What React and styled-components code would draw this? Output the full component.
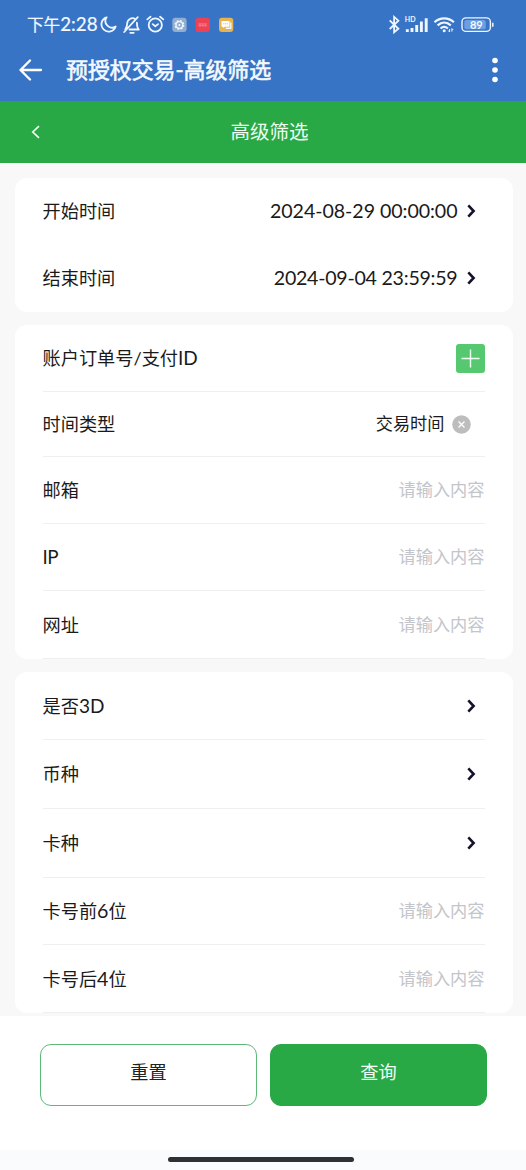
import React from 'react';
import styled, { createGlobalStyle } from 'styled-components';

const GlobalStyle = createGlobalStyle`
  * { box-sizing: border-box; }
  body {
    margin: 0;
    background: #fff;
    color: #1a1a1a;
    font-family: Lato, "Noto Sans CJK SC", sans-serif;
  }
`;

const Screen = styled.div`
  width: 526px;
  height: 1170px;
  display: flex;
  flex-direction: column;
  overflow: hidden;
  background: #fff;
`;

const TopArea = styled.header`
  height: 101px;
  flex: none;
  background: #3874c6;
  color: #f4f9ff;
`;

const StatusBar = styled.div`
  height: 40px;
  padding: 10px 32px 0 27px;
  display: flex;
  justify-content: space-between;
`;

const StatusGroup = styled.div`
  height: 30px;
  display: flex;
  align-items: center;
  svg { display: block; flex: none; }
`;

const Clock = styled.span`
  width: 73px;
  font-size: 16.6px;
  line-height: 28px;
  white-space: nowrap;
  -webkit-text-stroke: 0.2px currentColor;
`;

const Digits = styled.span`
  font-size: ${(p) => p.$size || 19.6}px;
  letter-spacing: ${(p) => p.$track || 0}px;
  line-height: 1;
`;

const TitleBar = styled.div`
  height: 60px;
  padding: 0 25px 0 19px;
  display: flex;
  align-items: center;
  svg { display: block; }
`;

const Title = styled.h1`
  flex: 1;
  margin: 0 0 0 23px;
  font-size: 21.9px;
  font-weight: 400;
  line-height: 30px;
  -webkit-text-stroke: 0.6px currentColor;
`;

const SubHeader = styled.div`
  height: 62px;
  flex: none;
  padding: 0 31px;
  display: grid;
  grid-template-columns: 10px 1fr 0;
  align-items: center;
  background: #29a846;
  color: #effff0;
  font-size: 19.5px;
  line-height: 30px;
  text-align: center;
  svg { display: block; }
`;

const SubTitle = styled.span`
  padding-left: 3px;
`;

const Content = styled.main`
  height: 853px;
  flex: none;
  padding: 15px 13.5px 0 14.5px;
  display: flex;
  flex-direction: column;
  gap: 13px;
  background: #f8f8f8;
`;

const Card = styled.section`
  flex: none;
  padding: 0 28px;
  border-radius: 12px;
  background: #fff;
`;

const Row = styled.div`
  height: ${(p) => p.$h}px;
  display: flex;
  align-items: center;
  justify-content: space-between;
  border-bottom: ${(p) => (p.$plain ? '0' : '1px solid #efefef')};
`;

const Label = styled.span`
  font-size: 18.2px;
  line-height: 28px;
  white-space: nowrap;
`;

const Trailing = styled.div`
  display: flex;
  align-items: center;
  gap: ${(p) => p.$gap || 9}px;
  padding-right: ${(p) => p.$inset || 0}px;
  font-size: 17.2px;
  line-height: 28px;
  white-space: nowrap;
  svg { display: block; }
`;

const Placeholder = styled.span`
  color: #c3c5cb;
  font-size: 17.2px;
  line-height: 28px;
`;

const AddButton = styled.button`
  width: 29px;
  height: 29px;
  padding: 0;
  border: 0;
  border-radius: 3px;
  display: grid;
  place-items: center;
  background: #56c870;
`;

const Footer = styled.footer`
  height: 134px;
  flex: none;
  padding: 28px 39px 0 40px;
  display: flex;
  gap: 13px;
`;

const Button = styled.button`
  flex: 1;
  height: 62px;
  padding: 0 0 6px;
  border: 1px solid ${(p) => (p.$primary ? '#29a846' : '#5fb87a')};
  border-radius: 11px;
  background: ${(p) => (p.$primary ? '#29a846' : '#fff')};
  color: ${(p) => (p.$primary ? '#f4fff5' : '#222')};
  font: 18.2px/28px Lato, "Noto Sans CJK SC", sans-serif;
`;

const GestureBar = styled.div`
  height: 20px;
  flex: none;
  padding: 7px 0 0 168px;
  background: #fafbfd;
  &::after {
    content: '';
    display: block;
    width: 186px;
    height: 5px;
    border-radius: 3px;
    background: #303034;
  }
`;

const Chevron = () => (
  <svg width="9" height="14" viewBox="0 0 9 14" fill="none" stroke="#15132a" strokeWidth="2.6">
    <path d="M1.300 1.400 6.600 7l-5.300 5.600" />
  </svg>
);

const ClearIcon = () => (
  <svg width="19" height="19" viewBox="0 0 19 19">
    <circle cx="9.5" cy="9.5" r="9.3" fill="#bdbdbd" />
    <path d="m6.500 6.500 6 6m0-6-6 6" stroke="#fff" strokeWidth="1.3" />
  </svg>
);

const LeftIcons = () => (
  <svg width="134" height="20" viewBox="100 15 134 20" fill="none" stroke="#eef6ff" strokeWidth="1.8" strokeLinecap="round" strokeLinejoin="round">
    <path d="M106.600 17.300a7.300 7.300 0 1 0 9.100 9.200 6.600 6.600 0 0 1-9.100-9.200Z" />
    <path d="M135.200 19a5.300 5.300 0 0 0-8 4.500c0 2.500-.6 4-1.900 5.700M129.500 29.500h9.300c-1.700-1.800-1.900-3.300-1.900-6.800M124.200 32l13.600-14.800M130.300 32.800h3.400" />
    <circle cx="155.300" cy="25" r="6.600" />
    <path d="m152.700 24.100 2.600 2.100 2.800-2.100M147.300 19.400l3.200-2.700m9.600 0 3.200 2.700" />
    <g stroke="none">
      <rect x="172.300" y="17.700" width="14.300" height="14.300" rx="3" fill="#91add0" />
      <rect x="195.600" y="17.700" width="14.300" height="14.300" rx="3" fill="#ec4255" />
      <rect x="219" y="17.700" width="14.300" height="14.300" rx="3" fill="#e7b34e" />
    </g>
    <circle cx="179.400" cy="24.900" r="4.300" strokeWidth="1.300" strokeDasharray="2 1.370" strokeLinecap="butt" />
    <circle cx="179.400" cy="24.900" r="3.300" strokeWidth="1.300" />
    <circle cx="179.400" cy="24.900" r="1" fill="#fff" stroke="none" />
    <path d="M199 24h1.700m-1.700 1.800h1.700m1.200-1.800h1.500m-1.500 1.800h1.500m1.300-1.800h1.600m-1.600 1.800h1.600" stroke="#ff9ca5" strokeWidth=".9" />
    <path d="M221.500 21h8v5.800h-4.700l-1.500 1.500v-1.500h-1.800Z" fill="#fff" stroke="none" />
    <path d="M230.800 23v5.300h-4.600" strokeWidth="1.400" />
    <path d="M223.500 23.800h.4m1.400 0h.4m1.400 0h.4" stroke="#e7b34e" strokeWidth=".8" />
  </svg>
);

const RightIcons = () => (
  <svg width="106" height="20" viewBox="388 15 106 20" fill="none" stroke="#eef6ff" strokeWidth="1.800">
    <path d="m389.700 20.300 8.700 8.500-4.300 3.500V16.900l4.300 3.800-8.700 8.300" />
    <text x="404.800" y="22.300" fill="#eef6ff" stroke="none" fontFamily="Lato, sans-serif" fontWeight="700" fontSize="7">HD</text>
    <path d="M407.300 29.300v2.600M412 27.900v4M416.700 25v6.900M421.400 21.500v10.400M426.200 18.300v13.600" strokeWidth="2.900" />
    <path d="M434.500 22.200c5.600-5.200 13.800-5.200 19.400 0M437.600 25.400c4-3.600 9.200-3.600 13.200 0M440.500 28.500c2.400-2 5-2 7.400 0" strokeWidth="2.200" />
    <circle cx="444.200" cy="30.800" r="1.500" fill="#eef6ff" stroke="none" />
    <path d="M449.600 32v-3m-1.300 1.600 1.300 1.400m2.300-.4v-3m0 0 1.300 1.400" strokeWidth="1" />
    <rect x="462" y="17.900" width="28.400" height="13.500" rx="4" strokeWidth="1.400" />
    <rect x="464.300" y="20" width="21.500" height="9.300" rx="2" fill="#6d9de3" stroke="none" />
    <path d="M492.800 22.700v4" strokeWidth="1.500" />
    <text x="476.300" y="28.700" fill="#f4f9ff" stroke="none" textAnchor="middle" fontFamily="Lato, sans-serif" fontWeight="700" fontSize="11">89</text>
  </svg>
);

const InputRow = ({ label, h }) => (
  <Row $h={h}>
    <Label>{label}</Label>
    <Placeholder>请输入内容</Placeholder>
  </Row>
);

const SelectRow = ({ label, h, value, plain }) => (
  <Row $h={h} $plain={plain}>
    <Label>{label}</Label>
    <Trailing $inset={9}>
      {value}
      <Chevron />
    </Trailing>
  </Row>
);

export default function App() {
  return (
    <Screen>
      <GlobalStyle />
      <TopArea>
        <StatusBar>
          <StatusGroup>
            <Clock>下午<Digits $size={18.8}>2:28</Digits></Clock>
            <LeftIcons />
          </StatusGroup>
          <StatusGroup>
            <RightIcons />
          </StatusGroup>
        </StatusBar>
        <TitleBar>
          <svg width="24" height="22" viewBox="0 0 24 22" fill="none" stroke="#fff" strokeWidth="2.300" strokeLinecap="round" strokeLinejoin="round">
            <path d="M22 11H1.500M11 1.500 1.500 11l9.500 9.500" />
          </svg>
          <Title>预授权交易-高级筛选</Title>
          <svg width="12" height="26" viewBox="0 0 12 26" fill="#fff">
            <circle cx="6" cy="3.500" r="2.800" />
            <circle cx="6" cy="13" r="2.800" />
            <circle cx="6" cy="22.500" r="2.800" />
          </svg>
        </TitleBar>
      </TopArea>
      <SubHeader>
        <svg width="10" height="14" viewBox="0 0 10 14" fill="none" stroke="#effff0" strokeWidth="1.700">
          <path d="M8 1.200 1.800 7 8 12.800" />
        </svg>
        <SubTitle>高级筛选</SubTitle>
      </SubHeader>
      <Content>
        <Card>
          <SelectRow h={66} plain label="开始时间" value={<Digits $track={-0.05}>2024-08-29 00:00:00</Digits>} />
          <SelectRow h={68} plain label="结束时间" value={<Digits $track={-0.25}>2024-09-04 23:59:59</Digits>} />
        </Card>
        <Card>
          <Row $h={67}>
            <Label>账户订单号/支付<Digits $size={19}>ID</Digits></Label>
            <AddButton aria-label="添加">
              <svg width="19" height="19" viewBox="0 0 19 19" stroke="#f2fff4" strokeWidth="1.400">
                <path d="M9.500.5v18M.5 9.500h18" />
              </svg>
            </AddButton>
          </Row>
          <Row $h={65}>
            <Label>时间类型</Label>
            <Trailing $gap={7} $inset={14}>
              交易时间
              <ClearIcon />
            </Trailing>
          </Row>
          <InputRow h={67} label="邮箱" />
          <InputRow h={67} label={<Digits $size={18.8} $track={-0.5}>IP</Digits>} />
          <InputRow h={68} label="网址" />
        </Card>
        <Card>
          <SelectRow h={68} label={<>是否<Digits $size={19}>3D</Digits></>} />
          <SelectRow h={69} label="币种" />
          <SelectRow h={69} label="卡种" />
          <InputRow h={67} label={<>卡号前<Digits>6</Digits>位</>} />
          <InputRow h={68} label={<>卡号后<Digits>4</Digits>位</>} />
        </Card>
      </Content>
      <Footer>
        <Button>重置</Button>
        <Button $primary>查询</Button>
      </Footer>
      <GestureBar />
    </Screen>
  );
}
